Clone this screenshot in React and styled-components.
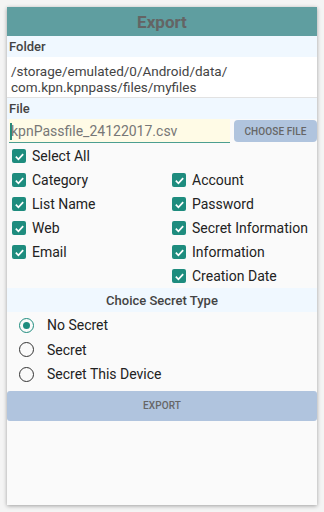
import React from "react";
import styled, { createGlobalStyle } from "styled-components";

const Global = createGlobalStyle`
  html, body { margin: 0; padding: 0; background: #ffffff; }
  body { font-family: Roboto, "Noto Sans", sans-serif; }
  * { box-sizing: border-box; }
`;

const Page = styled.div`
  width: 324px;
  height: 512px;
  padding: 7px 7px 7px 7px;
  background: #f4f4f4;
`;

const Card = styled.div`
  width: 310px;
  height: 498px;
  background: #fafafa;
  box-shadow: 0 1px 4px rgba(0, 0, 0, 0.35);
  display: flex;
  flex-direction: column;
`;

const Header = styled.div`
  height: 29px;
  background: #5f9ea0;
  color: #646464;
  font-size: 17px;
  font-weight: 700;
  display: flex;
  align-items: center;
  justify-content: center;
`;

const SectionLabel = styled.div`
  height: ${(p) => p.h || 21}px;
  background: #f0f8ff;
  color: #444;
  font-size: 13px;
  font-weight: 500;
  display: flex;
  align-items: center;
  justify-content: ${(p) => (p.center ? "center" : "flex-start")};
  padding-left: ${(p) => (p.center ? 0 : 2)}px;
`;

const Path = styled.div`
  background: #ffffff;
  color: #444;
  font-size: 13.5px;
  line-height: 16px;
  padding: 6px 4px 2px 4px;
  border-bottom: 1px solid #e2e2e2;
`;

const FileRow = styled.div`
  display: flex;
  align-items: flex-start;
  gap: 4px;
  height: 24px;
  padding-left: 2px;
  background: #fafafa;
`;

const FileInput = styled.div`
  flex: 1;
  height: 24px;
  background: #fffbe6;
  border-bottom: 1px solid #4c9e90;
  color: #777;
  font-size: 14px;
  display: flex;
  align-items: center;
  position: relative;
  padding-left: 2px;
  &::before {
    content: "";
    position: absolute;
    left: 1px;
    top: 4px;
    width: 2px;
    height: 17px;
    background: #2a8a7a;
  }
`;

const Button = styled.div`
  background: #b0c4de;
  color: #666;
  font-weight: 500;
  font-size: ${(p) => p.fs || 10}px;
  border-radius: ${(p) => p.r || 4}px;
  display: flex;
  align-items: center;
  justify-content: center;
  width: ${(p) => p.w || "auto"};
  height: ${(p) => p.h}px;
  margin-top: ${(p) => p.mt || 0}px;
  letter-spacing: 0.1px;
`;

const Checks = styled.div`
  display: grid;
  grid-template-columns: 160px 1fr;
  grid-auto-rows: 24px;
  padding-left: 5px;
  padding-top: 1px;
`;

const CheckItem = styled.div`
  display: flex;
  align-items: center;
  gap: 6px;
  color: #222;
  font-size: 14px;
  grid-column: ${(p) => p.col || "auto"};
`;

const Box = styled.span`
  width: 14px;
  height: 14px;
  border-radius: 2px;
  background: #1e8c7e;
  display: inline-flex;
  align-items: center;
  justify-content: center;
  flex: none;
`;

const Radios = styled.div`
  display: flex;
  flex-direction: column;
  padding-left: 12px;
  padding-top: 1px;
`;

const RadioItem = styled.div`
  height: 24.5px;
  display: flex;
  align-items: center;
  gap: 13px;
  color: #222;
  font-size: 14px;
`;

const Circle = styled.span`
  width: 15px;
  height: 15px;
  border-radius: 50%;
  border: 1.6px solid ${(p) => (p.on ? "#1e8c7e" : "#333")};
  display: inline-flex;
  align-items: center;
  justify-content: center;
  flex: none;
  &::after {
    content: "";
    display: ${(p) => (p.on ? "block" : "none")};
    width: 7px;
    height: 7px;
    border-radius: 50%;
    background: #1e8c7e;
  }
`;

const Check = ({ label, col }) => (
  <CheckItem col={col}>
    <Box>
      <svg width="11" height="11" viewBox="0 0 12 12">
        <path d="M2 6.2 L4.8 9 L10 3.4" fill="none" stroke="#fff" strokeWidth="1.9" />
      </svg>
    </Box>
    {label}
  </CheckItem>
);

export default function App() {
  return (
    <>
      <Global />
      <Page>
        <Card>
          <Header>Export</Header>
          <SectionLabel>Folder</SectionLabel>
          <Path>
            /storage/emulated/0/Android/data/
            <br />
            com.kpn.kpnpass/files/myfiles
          </Path>
          <SectionLabel h={21}>File</SectionLabel>
          <FileRow>
            <FileInput>kpnPassfile_24122017.csv</FileInput>
            <Button w="83px" h={22} mt={1}>CHOOSE FILE</Button>
          </FileRow>
          <Checks>
            <Check label="Select All" col="1 / span 2" />
            <Check label="Category" />
            <Check label="Account" />
            <Check label="List Name" />
            <Check label="Password" />
            <Check label="Web" />
            <Check label="Secret Information" />
            <Check label="Email" />
            <Check label="Information" />
            <Check label="Creation Date" col="2" />
          </Checks>
          <SectionLabel center h={24}>Choice Secret Type</SectionLabel>
          <Radios>
            <RadioItem><Circle on />No Secret</RadioItem>
            <RadioItem><Circle />Secret</RadioItem>
            <RadioItem><Circle />Secret This Device</RadioItem>
          </Radios>
          <Button h={30} r={3} fs={10} mt={4}>EXPORT</Button>
        </Card>
      </Page>
    </>
  );
}
